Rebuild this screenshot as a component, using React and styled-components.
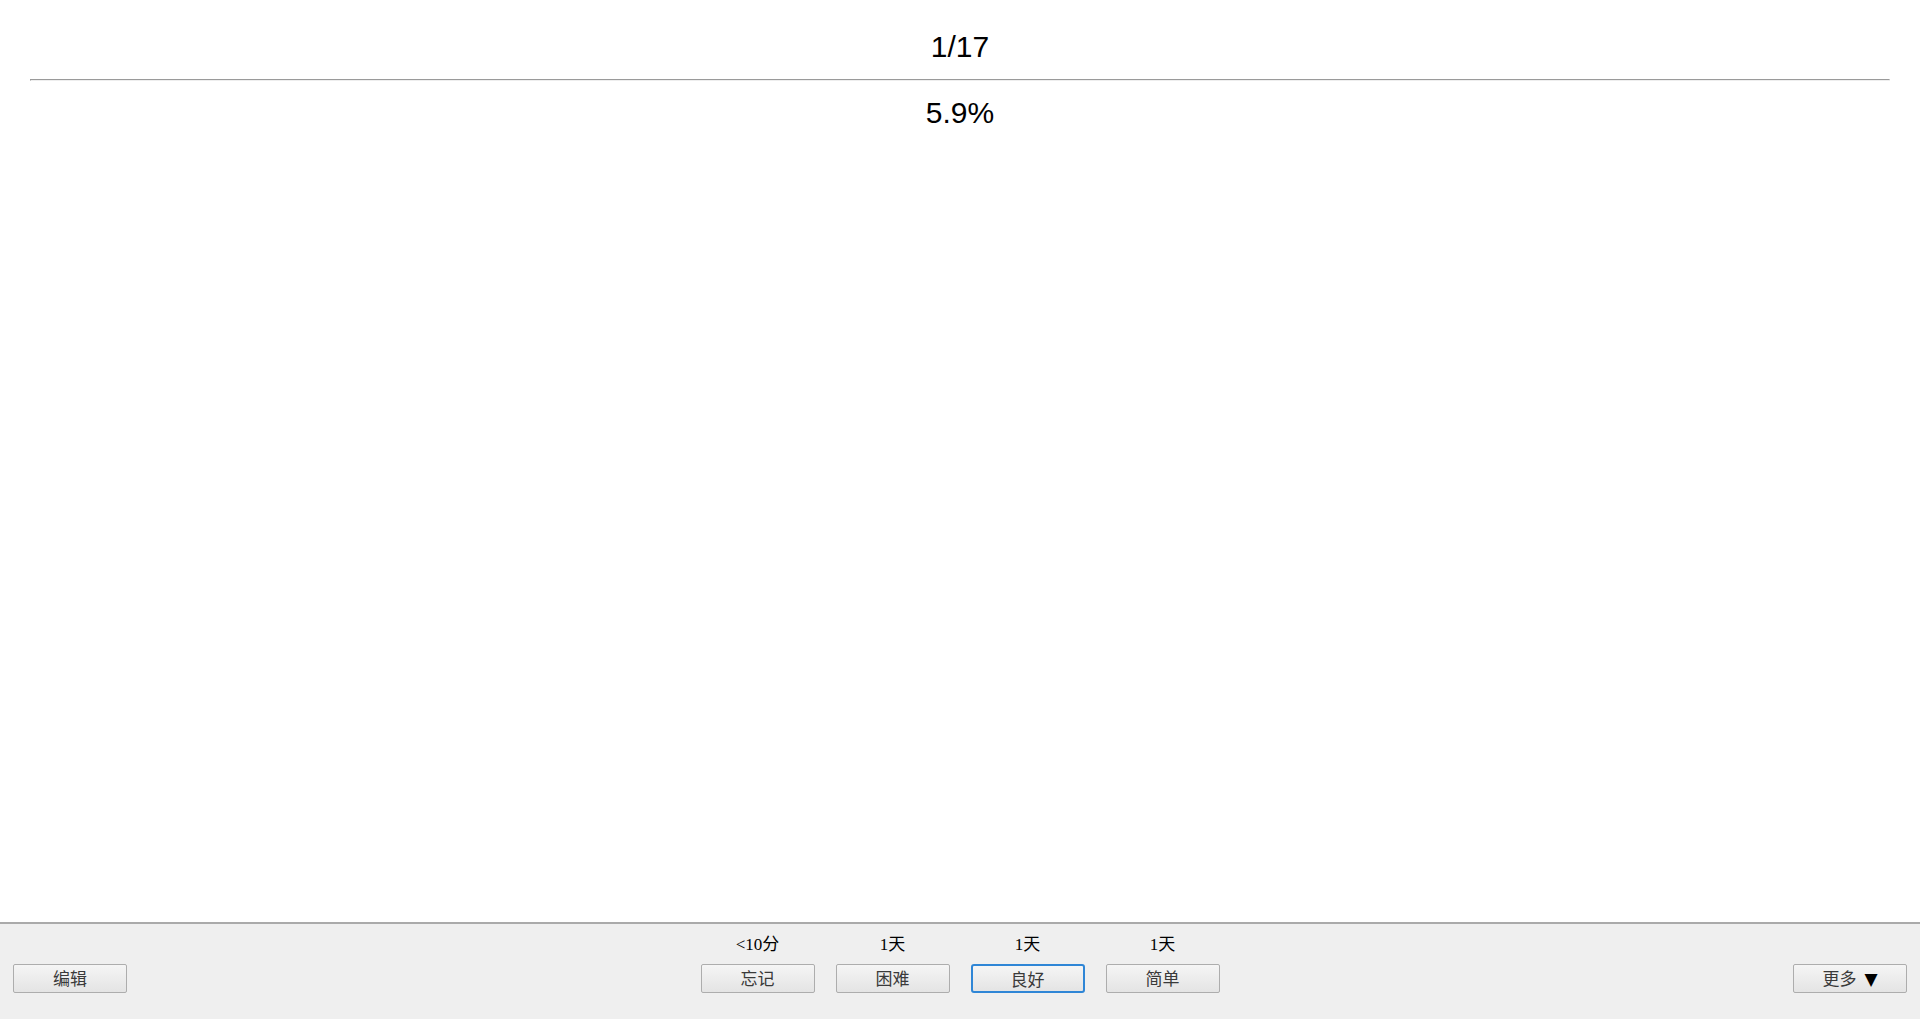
import { createGlobalStyle, styled, css } from "styled-components";

const GlobalStyle = createGlobalStyle`
  html, body {
    margin: 0;
    padding: 0;
    height: 100%;
    background: #ffffff;
  }
  #root {
    height: 100%;
  }
  *, *::before, *::after {
    box-sizing: border-box;
  }
`;

const Page = styled.div`
  height: 1019px;
  display: flex;
  flex-direction: column;
`;

const Card = styled.main`
  flex: 1;
  padding: 30px 30px 0;
  font-family: "Liberation Sans", Arial, sans-serif;
  color: #000;
`;

const BigText = styled.div`
  font-size: 30px;
  line-height: 34px;
  text-align: center;
`;

const Rule = styled.hr`
  margin: 15px 0 15px;
  border-style: inset;
  border-width: 1px;
  color: gray;
  height: 2px;
`;

const Bar = styled.footer`
  height: 97px;
  flex-shrink: 0;
  border-top: 2px solid #aaaaaa;
  background: #efefef;
  display: flex;
  align-items: flex-end;
  padding: 0 13px 26px;
  font-family: "Liberation Serif", "Noto Sans CJK SC", serif;
`;

const Side = styled.div`
  flex: 1;
  display: flex;
  justify-content: ${({ $end }) => ($end ? "flex-end" : "flex-start")};
`;

const Answers = styled.div`
  display: flex;
`;

const Answer = styled.div`
  width: 135px;
  display: flex;
  flex-direction: column;
  align-items: center;
  gap: 9px;
`;

const Due = styled.div`
  font-size: 17px;
  line-height: 20px;
  color: #000;
`;

const Button = styled.button`
  width: 114px;
  height: 29px;
  padding: 0 0 2px;
  border: 1px solid #adadad;
  border-radius: 2px;
  background: linear-gradient(#f5f5f5, #e4e4e4);
  color: #3a3a3a;
  font-family: "Liberation Serif", "Noto Sans CJK SC", serif;
  font-size: 17px;
  cursor: pointer;

  ${({ $focus }) =>
    $focus &&
    css`
      border: 2px solid #2f86d6;
      border-radius: 3px;
    `}
`;

const Arrow = styled.span`
  color: #000;
  margin-left: 8px;
  font-family: "DejaVu Sans", sans-serif;
  font-size: 17px;
`;

const answers = [
  { due: "<10分", label: "忘记" },
  { due: "1天", label: "困难" },
  { due: "1天", label: "良好", focus: true },
  { due: "1天", label: "简单" },
];

export default function App() {
  return (
    <Page>
      <GlobalStyle />
      <Card>
        <BigText>1/17</BigText>
        <Rule />
        <BigText>5.9%</BigText>
      </Card>
      <Bar>
        <Side>
          <Button>编辑</Button>
        </Side>
        <Answers>
          {answers.map((a, i) => (
            <Answer key={i}>
              <Due>{a.due}</Due>
              <Button $focus={a.focus}>{a.label}</Button>
            </Answer>
          ))}
        </Answers>
        <Side $end>
          <Button>
            更多<Arrow>▼</Arrow>
          </Button>
        </Side>
      </Bar>
    </Page>
  );
}
